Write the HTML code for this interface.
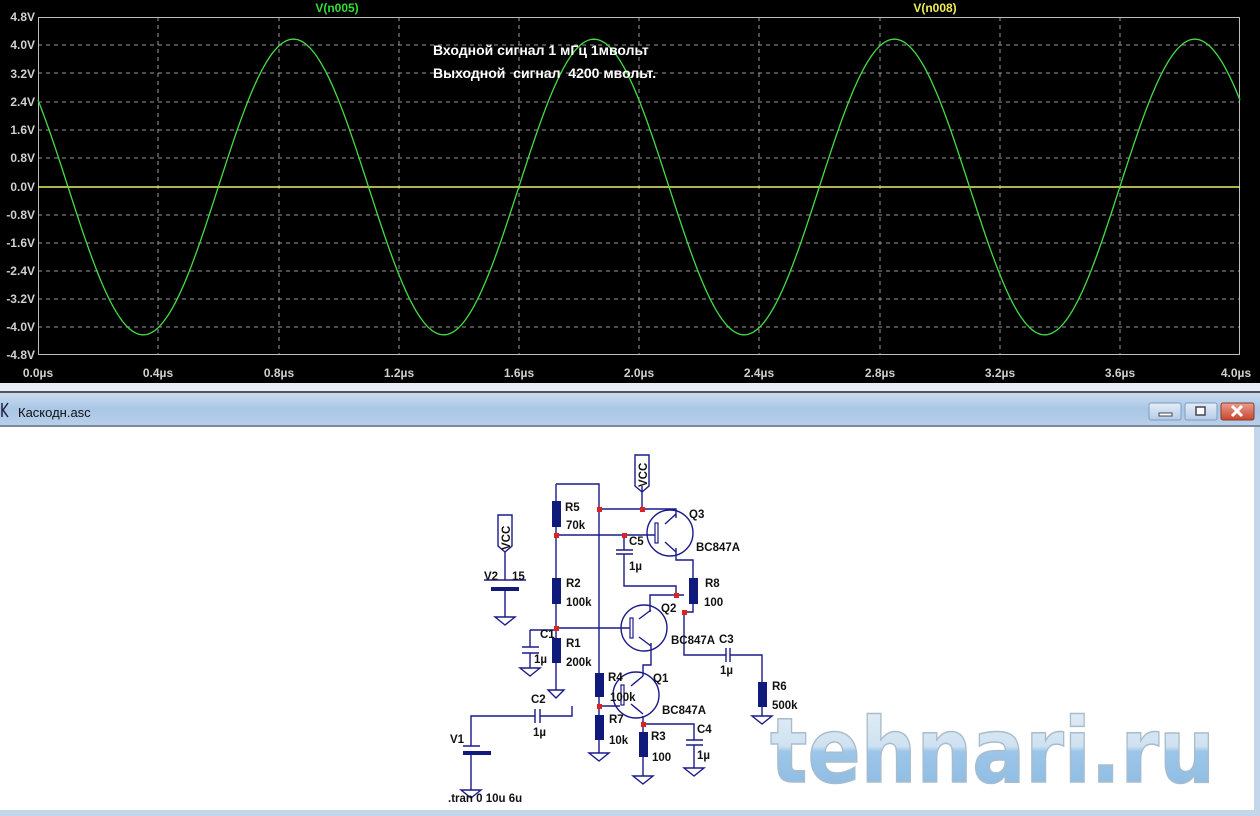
<!DOCTYPE html>
<html><head><meta charset="utf-8"><style>
html,body{margin:0;padding:0;width:1260px;height:816px;overflow:hidden;background:#fff;font-family:"Liberation Sans",sans-serif}
</style></head><body>
<svg width="1260" height="816" xmlns="http://www.w3.org/2000/svg" style="position:absolute;left:0;top:0">
<defs>
<linearGradient id="tb" x1="0" y1="0" x2="0" y2="1"><stop offset="0" stop-color="#c9dcf0"/><stop offset="0.5" stop-color="#a9c6e6"/><stop offset="1" stop-color="#b8d0ea"/></linearGradient>
<linearGradient id="wm" x1="0" y1="0" x2="0" y2="1"><stop offset="0" stop-color="#e6eff7"/><stop offset="0.45" stop-color="#cfe2f1"/><stop offset="0.5" stop-color="#9cc6e8"/><stop offset="1" stop-color="#88b8e0"/></linearGradient>
<linearGradient id="cl" x1="0" y1="0" x2="0" y2="1"><stop offset="0" stop-color="#e8a090"/><stop offset="1" stop-color="#c8452e"/></linearGradient>
<linearGradient id="bt" x1="0" y1="0" x2="0" y2="1"><stop offset="0" stop-color="#e4eef8"/><stop offset="1" stop-color="#b4cce6"/></linearGradient>
</defs>
<rect x="0" y="0" width="1260" height="383" fill="#000"/>
<g stroke="#9a9a9a" stroke-width="1" stroke-dasharray="4,4" fill="none">
<path d="M38 45H1240M38 73H1240M38 102H1240M38 130H1240M38 158H1240M38 187H1240M38 215H1240M38 243H1240M38 271H1240M38 299H1240M38 327H1240"/>
<path d="M158 17V355M279 17V355M399 17V355M519 17V355M639 17V355M759 17V355M880 17V355M1000 17V355M1120 17V355"/>
</g>
<rect x="38.5" y="17.5" width="1201" height="337" fill="none" stroke="#bdbdbd"/>
<g fill="#d0d0d0" font-size="12" text-anchor="end" font-weight="bold">
<text x="35" y="21">4.8V</text><text x="35" y="49">4.0V</text><text x="35" y="78">3.2V</text><text x="35" y="106">2.4V</text><text x="35" y="134">1.6V</text><text x="35" y="162">0.8V</text><text x="35" y="191">0.0V</text><text x="35" y="219">-0.8V</text><text x="35" y="247">-1.6V</text><text x="35" y="275">-2.4V</text><text x="35" y="303">-3.2V</text><text x="35" y="331">-4.0V</text><text x="35" y="359">-4.8V</text>
</g>
<g fill="#d0d0d0" font-size="12" text-anchor="middle" font-weight="bold">
<text x="38" y="377">0.0µs</text><text x="158" y="377">0.4µs</text><text x="279" y="377">0.8µs</text><text x="399" y="377">1.2µs</text><text x="519" y="377">1.6µs</text><text x="639" y="377">2.0µs</text><text x="759" y="377">2.4µs</text><text x="880" y="377">2.8µs</text><text x="1000" y="377">3.2µs</text><text x="1120" y="377">3.6µs</text><text x="1236" y="377">4.0µs</text>
</g>
<text x="337" y="12" fill="#33dd33" font-size="12" font-weight="bold" text-anchor="middle">V(n005)</text>
<text x="935" y="12" fill="#eeee55" font-size="12" font-weight="bold" text-anchor="middle">V(n008)</text>
<path d="M38 187H1240" stroke="#eeee66" stroke-width="1.5"/>
<path id="sine" fill="none" stroke="#44dd44" stroke-width="1.3" d=""/>
<text x="433" y="55" fill="#fff" font-size="14" font-weight="bold" xml:space="preserve">Входной сигнал 1 мГц 1мвольт</text>
<text x="433" y="78" fill="#fff" font-size="14" font-weight="bold" xml:space="preserve">Выходной  сигнал  4200 мвольт.</text>
<rect x="0" y="383" width="1260" height="9" fill="#e8eef6"/>
<rect x="0" y="391" width="1260" height="2" fill="#555"/>
<rect x="0" y="393" width="1260" height="33" fill="url(#tb)"/>
<rect x="0" y="425" width="1260" height="2" fill="#7a8a9a"/>
<text x="18" y="417" font-size="13" fill="#111">Каскодн.asc</text>
<path d="M2 403v14M8 403l-5 7 5 7" stroke="#224" stroke-width="1.5" fill="none"/>
<rect x="1149" y="403" width="32" height="17" rx="2" fill="url(#bt)" stroke="#7f9dbd"/>
<rect x="1159" y="413" width="13" height="3" fill="#fff" stroke="#445"/>
<rect x="1185" y="403" width="32" height="17" rx="2" fill="url(#bt)" stroke="#7f9dbd"/>
<rect x="1196" y="407" width="9" height="8" fill="#fff" stroke="#445" stroke-width="1.5"/>
<rect x="1221" y="403" width="33" height="17" rx="2" fill="url(#cl)" stroke="#8a3a2a"/>
<path d="M1232 406l10 10M1242 406l-10 10" stroke="#fff" stroke-width="3"/>
<rect x="1254" y="427" width="6" height="389" fill="#c4d6ea"/>
<rect x="0" y="810" width="1260" height="6" fill="#c4d6ea"/>
<g stroke="#1a1a8a" stroke-width="1.4" fill="none">
<path d="M642 486V509M600 509H676L676 518M556 484H599V673M556 484V501M556 527V578M556 535H657M624 535V550M624 554V586H676V595M556 604V638M556 628H632M556 663V690M530 630H556M530 630V647M530 653V668"/>
<path d="M676 548L676 560H693V578M693 604V612H684M684 612V655H726M730 655H762V682M762 707V716"/>
<path d="M650 612V595H684M651 643V665H643V676"/>
<path d="M599 697V715M599 740V753M599 706H620M572 706V716H540M535 716H471V746M471 753V790M643 716V732M643 757V776M643 724H694V740M694 745V768M505 552V580M505 590V617"/>
<circle cx="670" cy="533" r="23"/><circle cx="644" cy="628" r="23"/><circle cx="636" cy="695" r="23"/>
<path d="M665 524L676 514M665 542L676 552M639 619L651 610M639 637L651 646M631 686L643 676M631 704L643 714"/>
<path d="M636 455H649V486L642 492L635 486V455Z"/>
<path d="M498 515H512V546L505 552L498 546V515Z"/>
<path d="M616 550H633M616 554H633M522 647H539M522 653H539M726 648V662M730 648V662M535 709V723M540 709V723M686 740H703M686 745H703"/>
<path d="M484 580H526M463 746H480"/>
<path d="M548 690h16l-8 8zM495 617h20l-10 8zM520 668h20l-10 8zM752 716h20l-10 8zM589 753h20l-10 8zM633 776h20l-10 8zM684 768h20l-10 8zM461 790h20l-10 8z"/>
</g>
<g fill="#0f1a7a">
<rect x="552" y="501" width="9" height="26"/><rect x="552" y="578" width="9" height="26"/><rect x="552" y="638" width="9" height="25"/>
<rect x="689" y="578" width="9" height="26"/><rect x="758" y="682" width="9" height="25"/><rect x="595" y="673" width="9" height="24"/><rect x="595" y="715" width="9" height="25"/><rect x="639" y="732" width="9" height="25"/>
<rect x="491" y="587" width="28" height="4"/><rect x="463" y="751" width="28" height="4"/>
</g>
<g fill="#fff" stroke="#1a1a8a" stroke-width="1.2"><rect x="655" y="523" width="3" height="20"/><rect x="630" y="618" width="3" height="20"/><rect x="621" y="685" width="3" height="20"/></g>
<g fill="#dd2222"><rect x="597" y="507" width="5" height="5"/><rect x="640" y="507" width="5" height="5"/><rect x="554" y="533" width="5" height="5"/><rect x="622" y="533" width="5" height="5"/><rect x="674" y="593" width="5" height="5"/><rect x="682" y="610" width="5" height="5"/><rect x="554" y="626" width="5" height="5"/><rect x="597" y="704" width="5" height="5"/><rect x="641" y="722" width="5" height="5"/></g>
<g font-size="11.5" font-weight="bold" fill="#111">
<text x="565" y="511">R5</text><text x="566" y="529">70k</text><text x="689" y="518">Q3</text><text x="696" y="551">BC847A</text><text x="629" y="545">C5</text><text x="629" y="570">1µ</text>
<text x="705" y="587">R8</text><text x="704" y="606">100</text><text x="566" y="587">R2</text><text x="566" y="606">100k</text><text x="661" y="612">Q2</text>
<text x="540" y="638">C1</text><text x="566" y="647">R1</text><text x="534" y="663">1µ</text><text x="566" y="666">200k</text><text x="671" y="644">BC847A</text><text x="719" y="643">C3</text><text x="720" y="674">1µ</text>
<text x="772" y="690">R6</text><text x="772" y="709">500k</text><text x="608" y="681">R4</text><text x="610" y="701">100k</text><text x="653" y="682">Q1</text><text x="662" y="714">BC847A</text>
<text x="531" y="703">C2</text><text x="533" y="736">1µ</text><text x="609" y="723">R7</text><text x="609" y="744">10k</text><text x="651" y="740">R3</text><text x="652" y="761">100</text><text x="697" y="733">C4</text><text x="697" y="759">1µ</text>
<text x="450" y="743">V1</text><text x="484" y="580">V2</text><text x="512" y="580">15</text><text x="448" y="802">.tran 0 10u 6u</text>
<text transform="translate(647,487) rotate(-90)">VCC</text><text transform="translate(510,550) rotate(-90)">VCC</text>
</g>
<text x="770" y="782" font-size="90" font-weight="bold" fill="url(#wm)" stroke="#a9bccb" stroke-width="1.5" textLength="445" lengthAdjust="spacingAndGlyphs" font-family="DejaVu Sans, sans-serif">tehnari.ru</text>
</svg>
<script>
var d="";for(var x=38;x<=1240;x+=2){var t=(x-38)/300.5;var v=4.2*Math.cos(2*Math.PI*(t-0.85));var y=187-v*35.2;d+=(x==38?"M":"L")+x+" "+y.toFixed(1);}
document.getElementById("sine").setAttribute("d",d);
</script>
</body></html>
